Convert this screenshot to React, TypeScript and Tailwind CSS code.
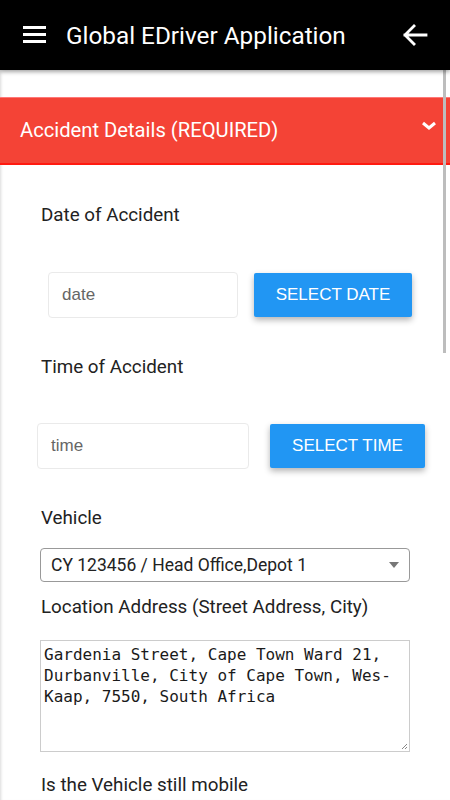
import React from "react";

export default function App() {
  const roboto = { fontFamily: "Roboto, 'Liberation Sans', sans-serif" } as React.CSSProperties;
  return (
    <div className="relative w-[450px] h-[800px] overflow-hidden bg-white" style={roboto}>
      <header className="relative z-10 h-[70px] bg-black flex items-center shadow-[0_2px_4px_rgba(0,0,0,0.35)]">
        <svg className="ml-[23px]" width="24" height="24" viewBox="0 0 24 24">
          <rect x="0" y="3" width="23" height="3" fill="#fff" />
          <rect x="0" y="10" width="23" height="3" fill="#fff" />
          <rect x="0" y="17" width="23" height="3" fill="#fff" />
        </svg>
        <div className="ml-[19px] mt-[2px] text-white text-[24.3px] leading-none">Global EDriver Application</div>
        <svg className="ml-auto mr-[22px]" width="26" height="24" viewBox="0 0 26 24">
          <path d="M24 12H3M12 3L3 12l9 9" stroke="#fff" strokeWidth="2.8" fill="none" strokeLinecap="square" />
        </svg>
      </header>

      <div className="pt-[27px] shadow-[inset_3px_0_3px_-2px_rgba(0,0,0,0.15)] h-[730px]">
        <div className="h-[68px] bg-[#f44336] border-t border-t-[#f77] border-b-2 border-b-[#ff1a10] flex items-center">
          <div className="ml-[20px] text-white text-[20.2px] leading-none">Accident Details (REQUIRED)</div>
          <svg className="ml-auto mr-[13px] -mt-[10px]" width="16" height="10" viewBox="0 0 16 10">
            <path d="M2 2l6 5 6-5" stroke="#fff" strokeWidth="3" fill="none" />
          </svg>
        </div>

        <div className="pl-[41px] pt-[41px] text-[18.8px] leading-[19px] text-[#222]">Date of Accident</div>
        <div className="flex items-center mt-[47px]">
          <div className="ml-[48px] w-[190px] h-[46px] border border-[#eaeaea] rounded-[4px] flex items-center pl-[13px] text-[17px] text-[#666] font-['Liberation_Sans',Arial,sans-serif]">date</div>
          <button className="ml-[16px] w-[158px] h-[44px] bg-[#2196f3] text-white text-[17px] rounded-[2px] shadow-[0_3px_6px_rgba(0,0,0,0.3)] font-['Liberation_Sans',Arial,sans-serif]">SELECT DATE</button>
        </div>

        <div className="pl-[41px] pt-[40px] text-[18.8px] leading-[19px] text-[#222]">Time of Accident</div>
        <div className="flex items-center mt-[46px]">
          <div className="ml-[37px] w-[212px] h-[46px] border border-[#eaeaea] rounded-[4px] flex items-center pl-[13px] text-[17px] text-[#666] font-['Liberation_Sans',Arial,sans-serif]">time</div>
          <button className="ml-[21px] w-[155px] h-[44px] bg-[#2196f3] text-white text-[17px] rounded-[2px] shadow-[0_3px_6px_rgba(0,0,0,0.3)] font-['Liberation_Sans',Arial,sans-serif]">SELECT TIME</button>
        </div>

        <div className="pl-[41px] pt-[40px] text-[18.8px] leading-[19px] text-[#222]">Vehicle</div>
        <div className="ml-[40px] mt-[20px] w-[370px] h-[34px] border border-[#999] rounded-[4px] flex items-center pl-[10px] text-[17.5px] text-[#222]">
          <span>CY 123456 / Head Office,Depot 1</span>
          <svg className="ml-auto mr-[10px]" width="10" height="6" viewBox="0 0 10 6">
            <path d="M0 0h10L5 6z" fill="#777" />
          </svg>
        </div>
        <div className="pl-[41px] pt-[16px] text-[18.8px] leading-[19px] text-[#222]">Location Address (Street Address, City)</div>
        <div className="relative ml-[40px] mt-[23px] w-[370px] h-[112px] border border-[#ccc] pl-[3px] pt-[3px] text-[16px] leading-[21px] text-[#1a1a1a] font-['DejaVu_Sans_Mono','Liberation_Mono',monospace] whitespace-pre">
          {"Gardenia Street, Cape Town Ward 21,\nDurbanville, City of Cape Town, Wes-\nKaap, 7550, South Africa"}
          <svg className="absolute right-[2px] bottom-[2px]" width="5" height="5" viewBox="0 0 5 5">
            <path d="M0 5L5 0M3 5L5 3" stroke="#888" strokeWidth="1" />
          </svg>
        </div>
        <div className="pl-[41px] pt-[24px] text-[18.8px] leading-[19px] text-[#222]">Is the Vehicle still mobile</div>
      </div>

      <div className="absolute left-[443px] top-[70px] w-[3px] h-[283px] bg-[#bdbdbd]" />
    </div>
  );
}
